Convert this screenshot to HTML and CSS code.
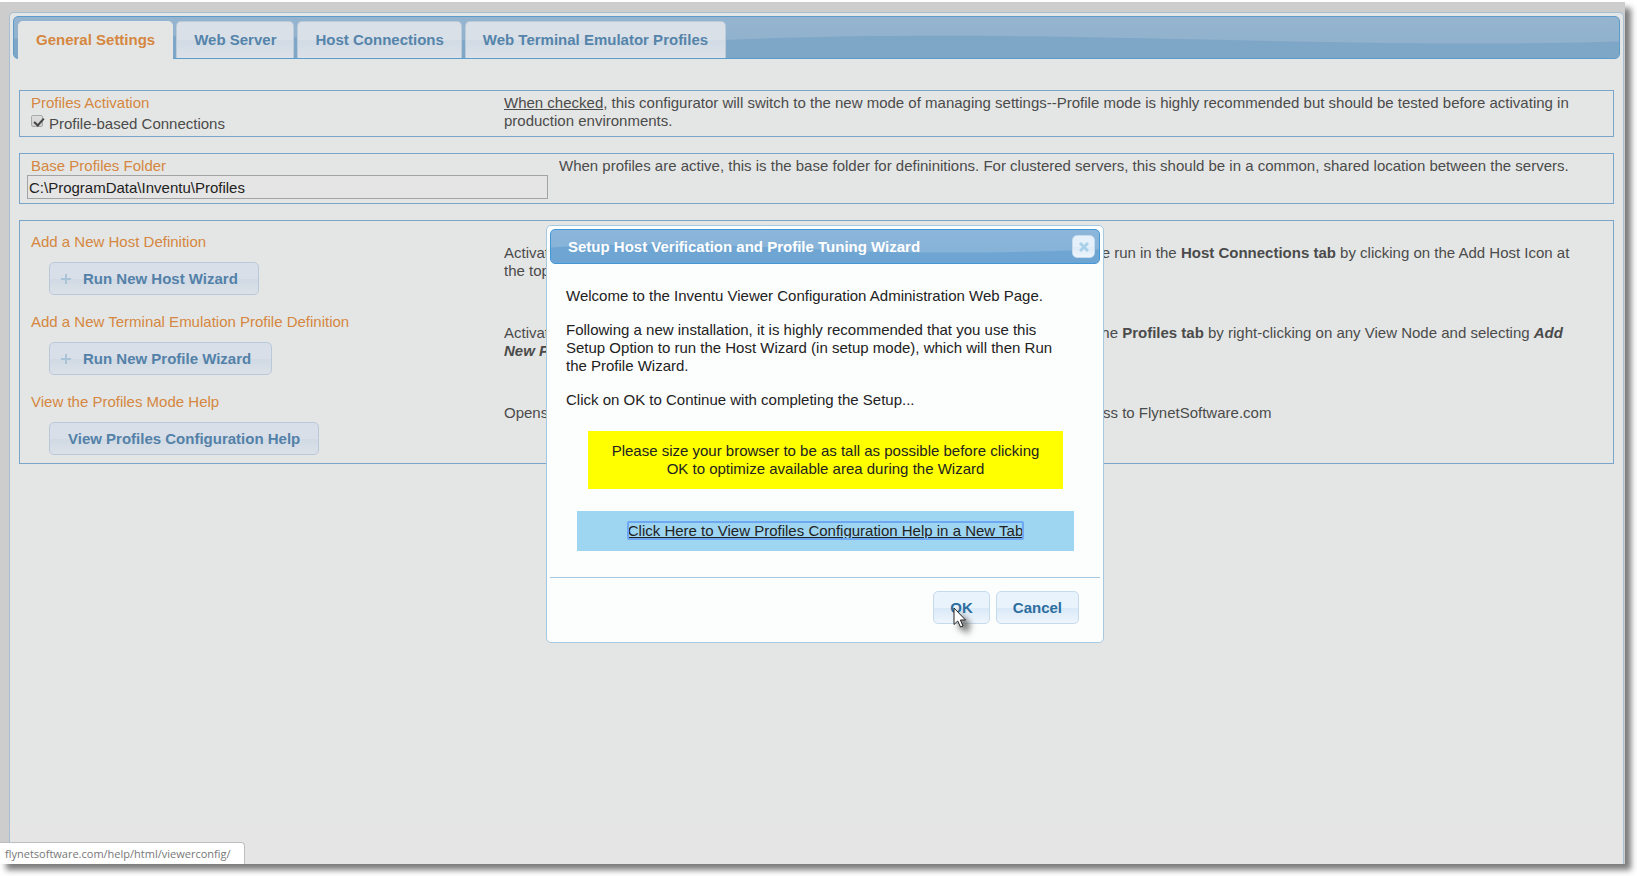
FILE: index.html
```html
<!DOCTYPE html>
<html lang="en">
<head>
<meta charset="utf-8">
<title>Inventu Viewer Configuration</title>
<link rel="stylesheet" href="styles.css">
</head>
<body>
<div class="window">
  <main class="panel">
    <nav class="tabbar">
      <svg class="gloss" viewBox="0 0 1600 42" preserveAspectRatio="none" aria-hidden="true"><path d="M0 22C250 14 450 30 720 23C960 14 1150 24 1400 27Q1500 28 1600 25V42H0Z"/></svg>
      <ul class="tabs">
        <li class="tab active"><a href="#general">General Settings</a></li>
        <li class="tab"><a href="#server">Web Server</a></li>
        <li class="tab"><a href="#hosts">Host Connections</a></li>
        <li class="tab"><a href="#profiles">Web Terminal Emulator Profiles</a></li>
      </ul>
    </nav>
    <div class="content" id="general">
      <section class="box activation">
        <div class="side">
          <h2 class="heading">Profiles Activation</h2>
          <div class="check">
            <input class="checkbox" type="checkbox" id="profile-mode" checked>
            <label for="profile-mode">Profile-based Connections</label>
          </div>
        </div>
        <p class="note"><u>When checked</u>, this configurator will switch to the new mode of managing settings--Profile mode is highly recommended but should be tested before activating in production environments.</p>
      </section>
      <section class="box folder">
        <div class="folder-field">
          <label class="heading" for="base-folder">Base Profiles Folder</label>
          <input class="path" type="text" id="base-folder" value="C:\ProgramData\Inventu\Profiles">
        </div>
        <p class="note">When profiles are active, this is the base folder for defininitions. For clustered servers, this should be in a common, shared location between the servers.</p>
      </section>
      <section class="box actions">
        <div class="row">
          <div class="side">
            <h2 class="heading">Add a New Host Definition</h2>
            <button class="button with-icon" type="button"><svg class="plus" viewBox="0 0 10 10" aria-hidden="true"><path d="M5 0V10M0 5H10"/></svg>Run New Host Wizard</button>
          </div>
          <p class="note"><span class="lead"><span>Activates the New Host Wizard</span><span>which can also be</span></span> run in the <b>Host Connections tab</b> by clicking on the Add Host Icon at<br>the top</p>
        </div>
        <div class="row">
          <div class="side">
            <h2 class="heading">Add a New Terminal Emulation Profile Definition</h2>
            <button class="button with-icon" type="button"><svg class="plus" viewBox="0 0 10 10" aria-hidden="true"><path d="M5 0V10M0 5H10"/></svg>Run New Profile Wizard</button>
          </div>
          <p class="note"><span class="lead wide"><span>Activates the New Profile Wizard</span><span>which can also be run in the</span></span> <b>Profiles tab</b> by right-clicking on any View Node and selecting <b><i>Add<br>New Profile</i></b></p>
        </div>
        <div class="row">
          <div class="side">
            <h2 class="heading">View the Profiles Mode Help</h2>
            <button class="button" type="button">View Profiles Configuration Help</button>
          </div>
          <p class="note"><span class="lead wide"><span>Opens the Profiles Mode Help</span><span>requires access</span></span> to FlynetSoftware.com</p>
        </div>
      </section>
    </div>
  </main>
  <div class="status">flynetsoftware.com/help/html/viewerconfig/</div>
</div>

<div class="dialog" role="dialog" aria-labelledby="dialog-title">
  <header class="titlebar">
    <svg class="gloss" viewBox="0 0 550 34" preserveAspectRatio="none" aria-hidden="true"><path d="M0 18C90 12 190 16 290 21Q410 26 550 20V34H0Z"/></svg>
    <h1 class="title" id="dialog-title">Setup Host Verification and Profile Tuning Wizard</h1>
    <button class="close" type="button" aria-label="Close"><svg class="cross" viewBox="0 0 10 10" aria-hidden="true"><path d="M1 1L9 9M9 1L1 9"/></svg></button>
  </header>
  <div class="message">
    <p>Welcome to the Inventu Viewer Configuration Administration Web Page.</p>
    <p>Following a new installation, it is highly recommended that you use this Setup Option to run the Host Wizard (in setup mode), which will then Run the Profile Wizard.</p>
    <p>Click on OK to Continue with completing the Setup...</p>
    <div class="warning">Please size your browser to be as tall as possible before clicking OK to optimize available area during the Wizard</div>
    <div class="help"><a href="#help">Click Here to View Profiles Configuration Help in a New Tab</a></div>
  </div>
  <footer class="buttons">
    <button class="button" type="button">OK</button>
    <button class="button" type="button">Cancel</button>
  </footer>
  <svg class="cursor" viewBox="0 0 24 30" aria-hidden="true"><path d="M1 1V17.500L4.700 14L7.500 20L10 19L7.400 13H12.500Z"/></svg>
</div>
</body>
</html>
```
FILE: styles.css
```css
* { box-sizing: border-box; }
body {
  margin: 0;
  min-height: 100vh;
  padding: 2px 12px 12px 0;
  display: flex;
  background: #fff;
  color: #4b4b4b;
  font: 15px/18px "Liberation Sans", Arial, sans-serif;
  overflow: hidden;
}
h1, h2, p, ul { margin: 0; padding: 0; }
.window {
  position: relative;
  flex: 1;
  display: flex;
  padding: 10px 1px 0 9px;
  background: #cdcdcd;
  box-shadow: 6px 6px 6px #7c7c7c;
}
.panel {
  flex: 1;
  min-width: 0;
  padding: 3px;
  border: 1px solid #a8bfd3;
  border-bottom: 0;
  border-radius: 5px 5px 0 0;
  background: linear-gradient(#e4e6e5 0 802px, #e5e5e5 822px);
}
.tabbar {
  position: relative;
  height: 43px;
  padding: 4px 4px 0;
  border: 1px solid #5c9ccc;
  border-radius: 5px;
  background: linear-gradient(#94b4cf, #8fb0cc);
}
.gloss { position: absolute; left: 0; top: 0; width: 100%; height: 100%; }
.tabbar .gloss { fill: #7ea6c7; border-radius: 4px; }
.tabs { position: relative; display: flex; gap: 3px; height: 100%; list-style: none; }
.tab {
  border: 1px solid #bccbda;
  border-bottom: 0;
  border-radius: 5px 5px 0 0;
  background: linear-gradient(#dae0e8 0 50%, #d0dbe5 52%, #dde1e8);
}
.tab a { display: block; padding: 9px 17px; color: #5584aa; font-weight: bold; text-decoration: none; }
.tab.active { margin-bottom: -1px; border-color: #e4e6e5; background: #e4e6e5; }
.tab.active a { color: #d58640; }
.content { padding: 31px 6px 0; }
.box { border: 1px solid #7ba5c8; padding: 3px 11px; }
.box + .box { margin-top: 16px; }
.activation, .row { display: flex; }
.side { flex: 0 0 473px; }
.note { flex: 1; min-width: 0; }
.heading { display: block; font: inherit; color: #d58640; }
.check { display: flex; gap: 6px; padding-top: 3px; }
.checkbox {
  appearance: none;
  width: 12px;
  height: 12px;
  margin: 0;
  border: 1px solid #a9a9a9;
  border-radius: 2px;
  background: linear-gradient(#dedede, #cfcfcf);
}
.checkbox:checked::before {
  content: "";
  display: block;
  width: 4px;
  height: 8px;
  margin: 0 0 0 4px;
  border: solid #444;
  border-width: 0 2px 2px 0;
  transform: rotate(42deg);
}
.folder { display: flex; gap: 11px; padding: 3px 7px 4px; }
.folder-field { flex: 0 0 521px; }
.folder-field .heading { padding: 0 4px; }
.path {
  display: block;
  width: 100%;
  height: 24px;
  padding: 0 1px;
  border: 1px solid #a3a3a3;
  background: #e5e5e5;
  color: #222;
  font: inherit;
}
.actions { padding-top: 12px; padding-bottom: 8px; }
.row + .row { margin-top: 18px; }
.row .note { padding-top: 11px; white-space: nowrap; }
.lead { display: inline-flex; justify-content: space-between; width: 606px; }
.lead.wide { width: 614px; }
.row .button { margin: 11px 0 0 18px; }
.button {
  height: 33px;
  padding: 0 18px;
  border: 1px solid #bac9d9;
  border-radius: 5px;
  background: linear-gradient(#d9dfe8 0 50%, #d0dae4 52%, #dce1e8);
  color: #5381a8;
  font: bold 15px/18px "Liberation Sans", Arial, sans-serif;
}
.row .button { display: flex; align-items: center; }
.button.with-icon { gap: 12px; padding: 0 20px 0 11px; }
.plus { width: 10px; height: 10px; fill: none; stroke: #a9c4d8; stroke-width: 2; }
.status {
  position: absolute;
  left: 0;
  bottom: 0;
  padding: 2px 13px 1px 5px;
  border: solid #bebebe;
  border-width: 1px 1px 0 0;
  border-radius: 0 4px 0 0;
  background: #fff;
  color: #777;
  font: 11px/18px "Open Sans", "Segoe UI", sans-serif;
}
.dialog {
  position: absolute;
  left: 546px;
  top: 225px;
  width: 558px;
  padding: 3px;
  border: 1px solid #a6c9e2;
  border-radius: 5px;
  background: #fcfdfd;
  color: #222;
}
.titlebar {
  position: relative;
  display: flex;
  align-items: center;
  justify-content: space-between;
  height: 35px;
  padding: 0 4px 0 17px;
  border: 1px solid #4297d7;
  border-radius: 5px;
  background: linear-gradient(#8cb6da, #84b1d7);
}
.titlebar .gloss { fill: #6ea5d2; border-radius: 4px; }
.title { position: relative; color: #fff; font: bold 15px/18px "Liberation Sans", Arial, sans-serif; }
.close {
  position: relative;
  display: flex;
  align-items: center;
  justify-content: center;
  width: 23px;
  height: 23px;
  padding: 0;
  border: 1px solid #c5dbec;
  border-radius: 5px;
  background: linear-gradient(#e6f0fa 0 50%, #dcebf8 52%, #edf4fb);
}
.cross { width: 10px; height: 10px; fill: none; stroke: #a9d0e9; stroke-width: 3; }
.message { padding: 23px 26px 26px 16px; }
.message p { margin-bottom: 16px; }
.warning {
  margin: 22px 11px 0 22px;
  padding: 11px 15px;
  background: #ff0;
  text-align: center;
}
.help { margin: 22px 0 0 11px; padding: 11px; background: #9ed5f1; text-align: center; }
.help a { color: #222; outline: 2px solid #6ea8f2; outline-offset: -1px; border-radius: 1px; }
.buttons { display: flex; justify-content: flex-end; gap: 6px; padding: 13px 21px 15px; border-top: 1px solid #a6c9e2; }
.buttons .button {
  padding: 0 16px;
  border-color: #c5dbec;
  background: linear-gradient(#e9f3fc 0 50%, #d9e9f8 52%, #eff5fc);
  color: #2e6e9e;
}
.cursor {
  position: absolute;
  left: 406px;
  top: 381px;
  width: 24px;
  height: 30px;
  fill: #fff;
  stroke: #222;
  stroke-width: 1;
  overflow: visible;
  filter: drop-shadow(6px 6px 3px #666);
}
```
